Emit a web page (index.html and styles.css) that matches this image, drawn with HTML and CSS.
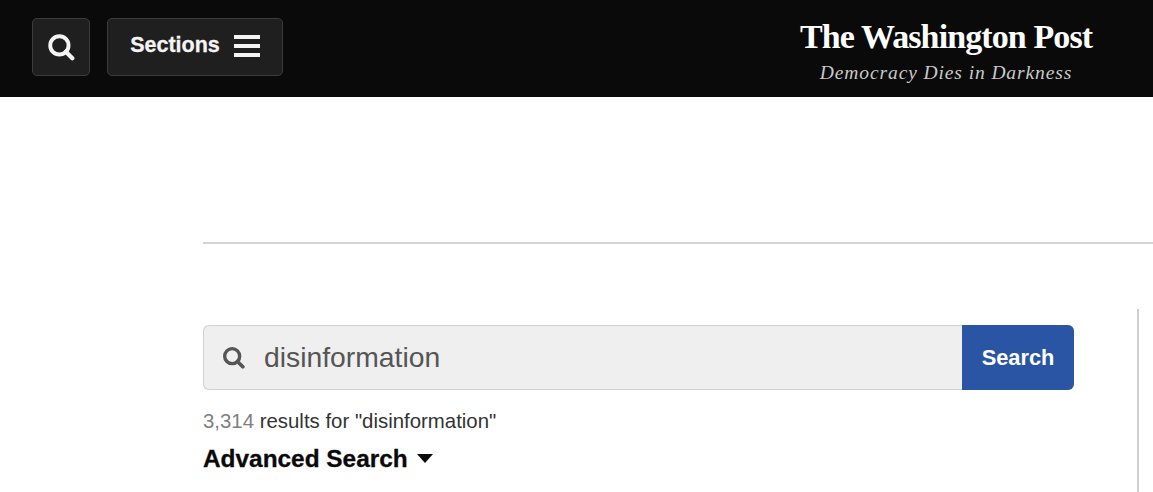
FILE: index.html
```html
<!DOCTYPE html>
<html lang="en">

<head>
  <meta charset="UTF-8">
  <meta name="viewport" content="width=device-width, initial-scale=1.0">
  <title>Search - The Washington Post</title>
  <link rel="stylesheet" href="styles.css">
</head>

<body>
  <div class="site-nav">
    <div class="nav-left">
      <a class="nav-button search-toggle">
        <svg width="28" height="28" viewBox="0 0 26 26"><circle cx="11.5" cy="11.5" r="8.5" fill="none" stroke="#f4f4f4" stroke-width="3.6"/><path d="M17.5 17.5L23.5 23.5" stroke="#f4f4f4" stroke-width="4" stroke-linecap="round"/></svg>
      </a>
      <a class="nav-button sections-toggle">
        <span class="sections-label">Sections</span>
        <span class="burger"><span></span><span></span><span></span></span>
      </a>
    </div>
    <div class="masthead">
      <div class="logo">The Washington Post</div>
      <div class="tagline">Democracy Dies in Darkness</div>
    </div>
  </div>

  <div class="page">
    <div class="rule"></div>
    <div class="results-row">
      <div class="results-col">
        <div class="search-box">
          <div class="search-icon">
            <svg width="23" height="23" viewBox="0 0 26 26"><circle cx="11.5" cy="11.5" r="8.5" fill="none" stroke="#555" stroke-width="3.8"/><path d="M17.5 17.5L23.5 23.5" stroke="#555" stroke-width="4.2" stroke-linecap="round"/></svg>
          </div>
          <div class="search-term">disinformation</div>
          <button class="search-button">Search</button>
        </div>
        <div class="result-count"><span class="count">3,314</span> results for "disinformation"</div>
        <div class="advanced">Advanced Search <span class="caret"></span></div>
      </div>
      <div class="side-col"></div>
    </div>
  </div>
</body>

</html>
```
FILE: styles.css
```css
html, body {
  height: 100%;
}

body {
  margin: 0;
  background-color: #fff;
  font-family: "Liberation Sans", Arial, sans-serif;
  overflow: hidden;
}

.site-nav {
  display: flex;
  justify-content: space-between;
  align-items: flex-start;
  height: 97px;
  box-sizing: border-box;
  padding: 18px 61px 0 32px;
  background-color: #0a0a0a;
}

.nav-left {
  display: flex;
  gap: 17px;
}

.nav-button {
  display: flex;
  align-items: center;
  justify-content: center;
  height: 58px;
  box-sizing: border-box;
  border: 1px solid #3c3c3c;
  border-radius: 5px;
  background-color: #1f1f1f;
  color: #f4f4f4;
}

.search-toggle {
  width: 58px;
}

.sections-toggle {
  width: 176px;
  gap: 14px;
}

.sections-label {
  margin-top: -3px;
  font-size: 21.5px;
  font-weight: bold;
  -webkit-text-stroke: 0.3px #f4f4f4;
}

.burger {
  display: flex;
  flex-direction: column;
  gap: 5px;
  width: 26px;
  margin-top: -3px;
}

.burger span {
  height: 4px;
  background-color: #f4f4f4;
}

.masthead {
  width: 292px;
  text-align: center;
  color: #fff;
}

.logo {
  font-family: "Liberation Serif", serif;
  font-size: 34px;
  font-weight: bold;
  line-height: 38px;
  white-space: nowrap;
  letter-spacing: -0.9px;
}

.tagline {
  margin-top: 5px;
  font-family: "Liberation Serif", serif;
  font-size: 19.5px;
  font-style: italic;
  line-height: 24px;
  letter-spacing: 0.9px;
  white-space: nowrap;
  color: #c9c9c9;
}

.page {
  margin-left: 203px;
}

.rule {
  margin-top: 145px;
  height: 2px;
  background-color: #d4d4d4;
}

.results-row {
  display: flex;
  margin-top: 65px;
}

.results-col {
  width: 871px;
  padding-top: 16px;
}

.side-col {
  margin-left: 63px;
  width: 2px;
  height: 183px;
  background-color: #cfcfcf;
}

.search-box {
  display: flex;
  height: 65px;
  box-sizing: border-box;
  border: 1px solid #d0d0d0;
  border-right: none;
  border-radius: 6px;
  background-color: #efefef;
}

.search-icon {
  display: flex;
  align-items: center;
  justify-content: center;
  width: 60px;
  padding-right: 1px;
  box-sizing: border-box;
}

.search-term {
  flex: 1;
  font-size: 28.3px;
  line-height: 63px;
  color: #555;
}

.search-button {
  width: 112px;
  height: 65px;
  margin-top: -1px;
  border: none;
  border-radius: 0 6px 6px 0;
  background-color: #2a55a5;
  color: #fff;
  font-family: "Liberation Sans", Arial, sans-serif;
  font-size: 21.8px;
  font-weight: bold;
}

.result-count {
  margin-top: 19px;
  font-size: 20.4px;
  line-height: 24px;
  color: #333;
}

.count {
  color: #808080;
}

.advanced {
  margin-top: 12px;
  font-size: 24.4px;
  font-weight: bold;
  line-height: 28px;
  color: #0a0a0a;
  -webkit-text-stroke: 0.3px #0a0a0a;
}

.caret {
  display: inline-block;
  margin-left: 3px;
  vertical-align: 4px;
  border-left: 8.5px solid transparent;
  border-right: 8.5px solid transparent;
  border-top: 9px solid #0a0a0a;
}
```
